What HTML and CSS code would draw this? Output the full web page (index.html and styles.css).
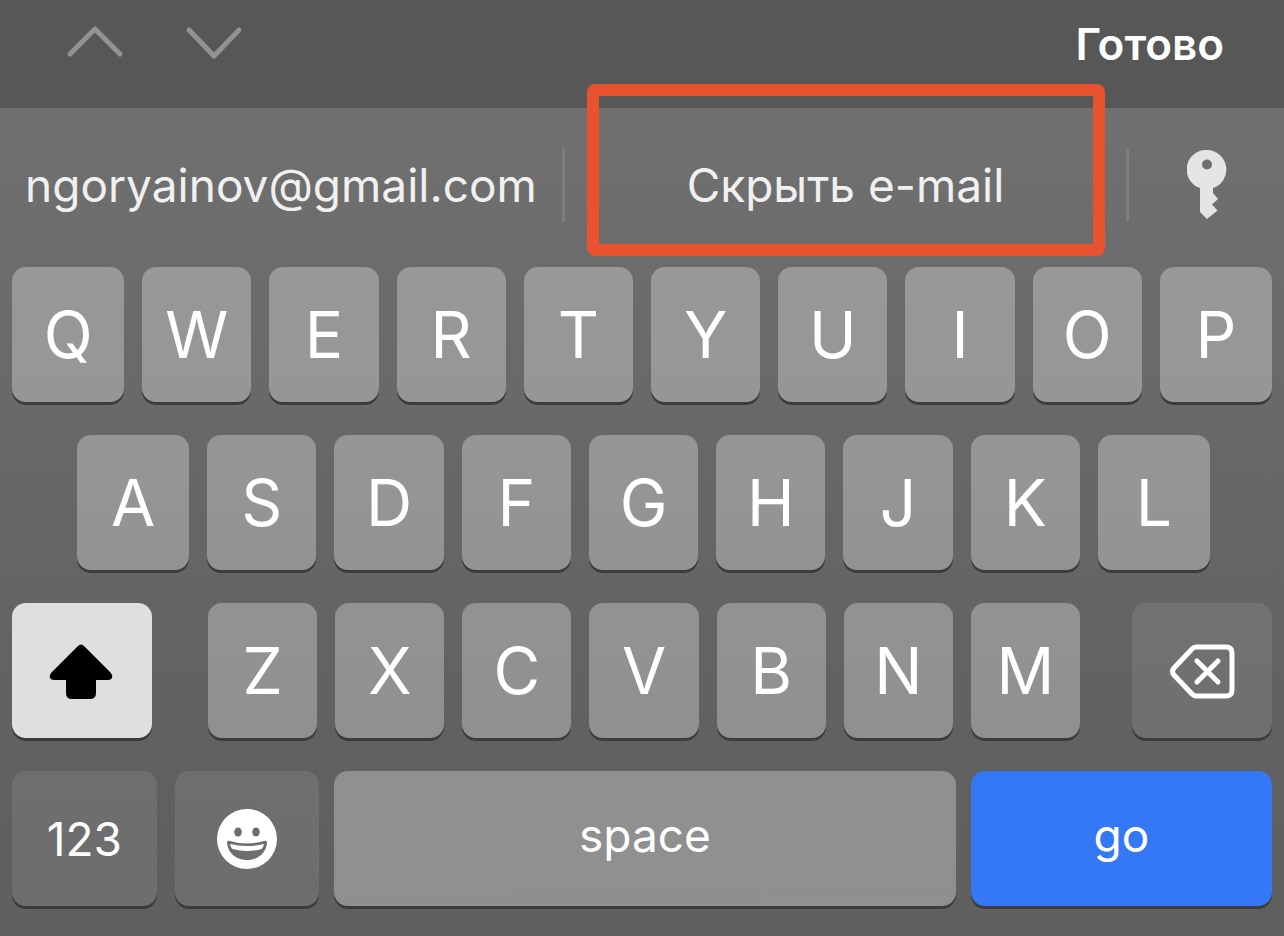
FILE: index.html
```html
<!DOCTYPE html>
<html lang="ru">
<head>
<meta charset="UTF-8">
<meta name="viewport" content="width=device-width, initial-scale=1.0">
<title>Клавиатура</title>
<link rel="stylesheet" href="styles.css">
</head>
<body>

<div class="toolbar">
    <div class="arrows">
        <button type="button" class="arrow" aria-label="Назад">
            <svg width="60" height="40" viewBox="0 0 60 40"><path d="M5 30 L30 5 L55 30"/></svg>
        </button>
        <button type="button" class="arrow" aria-label="Вперёд">
            <svg width="60" height="40" viewBox="0 0 60 40"><path d="M5 6 L30 32 L55 6"/></svg>
        </button>
    </div>
    <button type="button" class="done">Готово</button>
</div>

<div class="keyboard">
    <div class="suggestions">
        <button type="button" class="suggestion">ngoryainov@gmail.com</button>
        <span class="divider"></span>
        <button type="button" class="suggestion highlighted">Скрыть e-mail</button>
        <span class="divider"></span>
        <button type="button" class="suggestion" aria-label="Пароли">
            <svg width="40" height="70" viewBox="0 0 40 70">
                <path fill="#e4e4e4" fill-rule="evenodd" d="M20 0 A19.5 19.5 0 0 1 26 38 V43 L31 49 L25 54.500 L30.500 60.500 L20 69 L13 62 V38 A19.500 19.500 0 0 1 20 0 Z M20 9.500 A5 5 0 1 0 20 19.500 A5 5 0 1 0 20 9.500 Z"/>
            </svg>
        </button>
    </div>

    <div class="keys">
        <div class="row row-top">
            <button type="button" class="key">Q</button>
            <button type="button" class="key">W</button>
            <button type="button" class="key">E</button>
            <button type="button" class="key">R</button>
            <button type="button" class="key">T</button>
            <button type="button" class="key">Y</button>
            <button type="button" class="key">U</button>
            <button type="button" class="key">I</button>
            <button type="button" class="key">O</button>
            <button type="button" class="key">P</button>
        </div>

        <div class="row row-middle">
            <button type="button" class="key">A</button>
            <button type="button" class="key">S</button>
            <button type="button" class="key">D</button>
            <button type="button" class="key">F</button>
            <button type="button" class="key">G</button>
            <button type="button" class="key">H</button>
            <button type="button" class="key">J</button>
            <button type="button" class="key">K</button>
            <button type="button" class="key">L</button>
        </div>

        <div class="row row-shift">
            <button type="button" class="key shift" aria-label="Shift">
                <svg width="66" height="56" viewBox="0 0 66 56">
                    <path d="M29 3 Q32 0 35 3 L62 30 Q64 33 63 35 Q62 37 59 37 H47 V50 Q47 56 41 56 H23 Q17 56 17 50 V37 H5 Q2 37 1 35 Q0 33 2 30 Z"/>
                </svg>
            </button>
            <div class="row letters">
                <button type="button" class="key">Z</button>
                <button type="button" class="key">X</button>
                <button type="button" class="key">C</button>
                <button type="button" class="key">V</button>
                <button type="button" class="key">B</button>
                <button type="button" class="key">N</button>
                <button type="button" class="key">M</button>
            </div>
            <button type="button" class="key dark" aria-label="Delete">
                <svg width="66" height="56" viewBox="0 0 66 56" fill="none" stroke="#fff" stroke-width="5" stroke-linecap="round" stroke-linejoin="round">
                    <path d="M27 4 H57 Q63 4 63 10 V47 Q63 53 57 53 H27 Q25 53 23 51 L5 32 Q2 28.500 5 25 L23 6 Q25 4 27 4 Z"/>
                    <path d="M28 18 L49 39 M49 18 L28 39"/>
                </svg>
            </button>
        </div>

        <div class="row row-bottom">
            <div class="row">
                <button type="button" class="key dark word">123</button>
                <button type="button" class="key dark" aria-label="Emoji">
                    <svg width="60" height="60" viewBox="0 0 60 60">
                        <circle cx="30" cy="30" r="30" fill="#fff"/>
                        <g fill="#6e6e70">
                            <ellipse cx="21" cy="23" rx="3.800" ry="4.500"/>
                            <ellipse cx="39" cy="23" rx="3.800" ry="4.500"/>
                            <path d="M10 34 Q10 31 13 32 Q30 37 47 32 Q50 31 50 34 C49 44 41 51 30 51 C19 51 11 44 10 34 Z"/>
                        </g>
                        <path fill="#fff" d="M13 35 Q30 39 47 35 Q46.500 38.500 44.500 40 Q30 44 15.500 40 Q13.500 38.500 13 35 Z"/>
                    </svg>
                </button>
            </div>
            <button type="button" class="key word raised">space</button>
            <button type="button" class="key word raised go">go</button>
        </div>
    </div>
</div>

</body>
</html>
```

FILE: styles.css
```css
* {
    box-sizing: border-box;
}

body {
    margin: 0;
    font-family: Inter, "Liberation Sans", sans-serif;
    background: #575757;
    color: #fff;
}

button {
    margin: 0;
    padding: 0;
    border: none;
    background: none;
    color: inherit;
    font-family: inherit;
    cursor: pointer;
}

svg {
    display: block;
}

.toolbar {
    display: flex;
    justify-content: space-between;
    align-items: center;
    height: 108px;
    padding: 0 60px 20px 65px;
}

.arrows {
    display: flex;
    gap: 59px;
}

.arrow path {
    fill: none;
    stroke: #929292;
    stroke-width: 5;
    stroke-linecap: round;
    stroke-linejoin: round;
}

.done {
    font-size: 44px;
    font-weight: 600;
}

.keyboard {
    background: linear-gradient(#707070, #686868 40%, #616162 75%, #5f5f5f);
}

.suggestions {
    display: grid;
    grid-template-columns: 562fr 3px 561fr 3px 155fr;
    align-items: center;
    height: 159px;
}

.suggestion {
    display: flex;
    justify-content: center;
    align-items: center;
    height: 100%;
    padding-bottom: 6px;
    color: #f0f0f0;
    font-size: 46px;
    font-weight: 400;
    white-space: nowrap;
}

.divider {
    height: 74px;
    margin-bottom: 6px;
    border-radius: 2px;
    background: #7e7e7e;
}

/* frame drawn around the "hide e-mail" option */
.highlighted {
    position: relative;
}

.highlighted::after {
    content: "";
    position: absolute;
    top: -24px;
    right: 21px;
    bottom: 11px;
    left: 22px;
    border: 12px solid #e9522f;
    border-radius: 8px;
}

.keys {
    display: flex;
    flex-direction: column;
    gap: 33px;
    padding: 0 12px 30px;
}

.row {
    display: flex;
    gap: 18px;
}

.key {
    display: flex;
    flex: 109;
    justify-content: center;
    align-items: center;
    height: 135px;
    border-radius: 14px;
    background: rgba(255, 255, 255, 0.3);
    box-shadow: 0 3px 0 #3c3c3c;
    font-size: 64px;
    font-weight: 400;
}

.row-middle {
    padding: 0 62px 0 65px;
}

/* the outer keys are a bit wider */
.row-top .key:first-child,
.row-top .key:last-child,
.row-middle .key:first-child,
.row-middle .key:last-child {
    flex-grow: 112;
}

.row-shift {
    display: grid;
    grid-template-columns: 140fr 876fr 140fr;
    gap: 52px;
}

.letters {
    padding-left: 4px;
}

.row-bottom {
    display: grid;
    grid-template-columns: 307fr 621fr 301fr;
    gap: 15px;
}

.dark {
    background: rgba(255, 255, 255, 0.09);
}

.shift {
    background: #dfdfe0;
}

.word {
    font-size: 46px;
}

.raised {
    padding-bottom: 8px;
}

.go {
    background: #3478f6;
}
```
